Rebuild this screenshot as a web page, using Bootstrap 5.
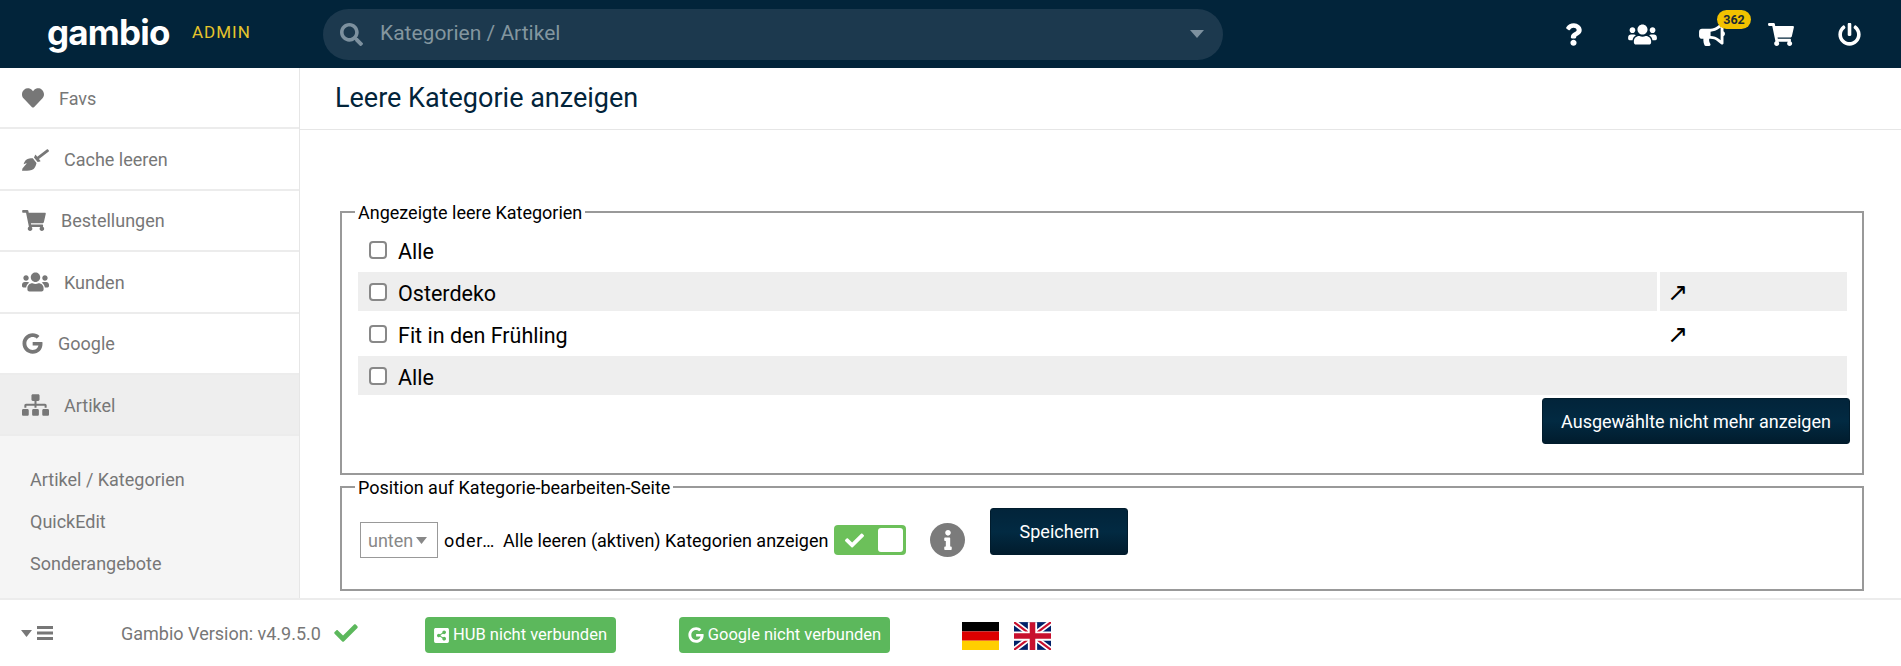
<!DOCTYPE html>
<html lang="de">
<head>
    <meta charset="utf-8">
    <meta name="viewport" content="width=device-width, initial-scale=1">
    <title>Leere Kategorie anzeigen</title>
    <link href="https://cdn.jsdelivr.net/npm/bootstrap@5.3.3/dist/css/bootstrap.min.css" rel="stylesheet">
    <style>
        html, body { height: 100%; overflow: hidden; }
        body { font-family: Roboto, "Liberation Sans", sans-serif; color: #000; }
        svg { fill: currentColor; flex: none; display: block; }

        .app-shell { height: 666px; }

        /* top bar */
        .top-bar { height: 68px; background: #02243a; padding: 0; flex-wrap: nowrap; justify-content: flex-start; }
        .brand-name { font-family: Inter, Lato, sans-serif; font-weight: 700; font-size: 35px; line-height: 1; color: #fff; margin: 0 0 4px 47px; width: 121px; letter-spacing: -.8px; }
        .brand-tag { font-size: 17px; color: #e5c42c; letter-spacing: 1px; margin: 0 0 2px 24px; width: 131px; }
        .search-pill { width: 900px; height: 51px; background: #1c394e; border-radius: 26px; padding: 0 19px 0 17px; color: #7d919f; }
        .search-text { font-size: 21px; margin-left: 17px; color: #83969f; }
        .top-icons { color: #fff; margin-left: 316px; position: relative; }
        .top-cell { width: 69px; height: 68px; }
        .count-bubble { position: absolute; left: 178px; top: 10px; width: 34px; height: 19px; border-radius: 10px; background: #f2c200; color: #1b2a33; font-size: 12.5px; font-weight: 700; line-height: 19px; text-align: center; }

        /* side menu */
        .side-menu { width: 300px; border-right: 1px solid #e6e6e6; color: #777; flex: none; overflow: hidden; }
        .side-item { height: 61.4px; padding: 1px 0 0 22px; gap: 15px; font-size: 18px; border-bottom: 2px solid #ececec; }
        .side-item.is-open { background: #eee; }
        .side-sub { background: #f5f5f5; padding-top: 23px; font-size: 18px; }
        .side-sub div { height: 42px; line-height: 42px; padding-left: 30px; }

        /* content */
        .page-title { height: 62px; margin: 0; padding-left: 35px; border-bottom: 1px solid #e6e6e6; font-size: 27px; font-weight: 400; line-height: 60px; color: #02243a; }
        .page-body { padding: 70px 37px 0 40px; }
        .frame-box { border: 2px solid #999; padding: 0 12px 0 16px; margin: 0; min-width: 0; }
        .frame-box legend { float: none; width: auto; font-size: 18px; line-height: 22px; margin: 0 0 0 -3px; padding: 2px 3px 0; }
        .cat-grid { display: grid; grid-template-columns: 1fr 187px; gap: 3px; margin: 6px 3px 0 0; font-size: 21.5px; }
        .cat-cell { height: 39px; padding-left: 11px; gap: 11px; }
        .cat-cell span { margin-top: 5px; }
        .cat-wide { grid-column: 1 / -1; }
        .cat-shade { background: #eee; }
        .cat-link { padding: 2px 0 0 7px; font-size: 25px; font-family: "DejaVu Sans", sans-serif; line-height: 1; }
        .cat-check.form-check-input { width: 18px; height: 18px; margin: 0; border: 2px solid #888; border-radius: 4px; background-color: #fff; }
        .dark-btn.btn { background: linear-gradient(#02243a, #022a42 50%, #011c2d); border: 1px solid #011c2d; color: #fff; font-size: 18px; border-radius: 3px; padding: 0; }
        .hide-btn.btn { width: 308px; height: 46px; margin: 3px 0 29px; }
        .save-btn.btn { width: 138px; height: 47px; margin-left: 25px; }
        .pos-row { padding: 9px 0 31px 2px; font-size: 18px; }
        .pos-left { margin-top: 14px; }
        .pos-select { width: 78px; height: 36px; border: 1px solid #999; color: #888; padding-left: 7px; gap: 3px; margin-right: 6px; }
        .oder-text { margin-right: 8px; letter-spacing: .8px; }
        .toggle-box { width: 72px; height: 30px; background: #6cc05a; border-radius: 4px; margin-left: 6px; padding: 3px; color: #fff; }
        .toggle-box span { width: 25px; height: 24px; background: #fff; border-radius: 3px; }
        .info-dot { width: 35px; height: 34px; border-radius: 50%; background: #7b7b7b; color: #fff; margin-left: 24px; }

        /* bottom bar */
        .bottom-bar { height: 68px; flex: none; border-top: 2px solid #ececec; background: #fff; color: #777; font-size: 18px; }
        .menu-toggle { width: 121px; padding-left: 21px; gap: 5px; }
        .version-text { width: 237px; white-space: nowrap; }
        .ok-mark { color: #5cb85c; }
        .status-btn.btn { background: #5cb85c; border: 0; color: #fff; height: 36px; font-size: 16.5px; padding: 0; gap: 4px; border-radius: 4px; white-space: nowrap; margin-top: 4px; }
        .hub-btn.btn { width: 191px; margin-left: 67px; }
        .goo-btn.btn { width: 211px; margin-left: 63px; }
        .flag-de { margin: 5px 0 0 72px; }
        .flag-uk { margin: 5px 0 0 15px; }
    </style>
</head>
<body>
<div class="app-shell d-flex flex-column">
    <nav class="navbar top-bar">
        <div class="brand-name">gambio</div>
        <div class="brand-tag">ADMIN</div>
        <div class="search-pill d-flex align-items-center">
            <svg width="23" height="23" viewBox="0 0 512 512"><path d="M505 442.7L405.3 343c-4.5-4.5-10.6-7-17-7H372c27.6-35.3 44-79.7 44-128C416 93.1 322.9 0 208 0S0 93.1 0 208s93.1 208 208 208c48.3 0 92.7-16.4 128-44v16.3c0 6.4 2.5 12.5 7 17l99.7 99.7c9.4 9.4 24.6 9.4 33.9 0l28.3-28.3c9.4-9.4 9.4-24.6.1-34zM208 336c-70.7 0-128-57.2-128-128 0-70.7 57.2-128 128-128 70.7 0 128 57.2 128 128 0 70.7-57.2 128-128 128z"/></svg>
            <span class="search-text flex-grow-1">Kategorien / Artikel</span>
            <svg width="14" height="8" viewBox="0 0 14 8"><path d="M0 0h14L7 8z"/></svg>
        </div>
        <div class="top-icons d-flex">
            <div class="top-cell d-flex align-items-center justify-content-center">
                <svg width="17" height="23" viewBox="0 0 384 512"><path d="M202.021 0C122.202 0 70.503 32.703 29.914 91.026c-7.363 10.58-5.093 25.086 5.178 32.874l43.138 32.709c10.373 7.865 25.132 6.026 33.253-4.148 25.049-31.381 43.63-49.449 82.757-49.449 30.764 0 68.816 19.799 68.816 49.631 0 22.552-18.617 34.134-48.993 51.164-35.423 19.86-82.299 44.576-82.299 106.405V320c0 13.255 10.745 24 24 24h72.471c13.255 0 24-10.745 24-24v-5.773c0-42.86 125.268-44.645 125.268-160.627C377.504 66.256 286.902 0 202.021 0zM192 373.459c-38.196 0-69.271 31.075-69.271 69.271 0 38.195 31.075 69.27 69.271 69.27s69.271-31.075 69.271-69.271-31.075-69.27-69.271-69.27z"/></svg>
            </div>
            <div class="top-cell d-flex align-items-center justify-content-center">
                <svg width="29" height="23" viewBox="0 0 640 512"><path d="M96 224c35.3 0 64-28.7 64-64s-28.7-64-64-64-64 28.7-64 64 28.7 64 64 64zm448 0c35.3 0 64-28.7 64-64s-28.7-64-64-64-64 28.7-64 64 28.7 64 64 64zm32 32h-64c-17.6 0-33.5 7.1-45.1 18.6 40.3 22.1 68.9 62 75.1 109.4h66c17.7 0 32-14.3 32-32v-32c0-35.3-28.7-64-64-64zm-256 0c61.9 0 112-50.1 112-112S381.9 32 320 32 208 82.1 208 144s50.1 112 112 112zm76.8 32h-8.3c-20.8 10-43.9 16-68.5 16s-47.6-6-68.5-16h-8.3C179.6 288 128 339.6 128 403.2V432c0 26.5 21.5 48 48 48h288c26.5 0 48-21.5 48-48v-28.8c0-63.6-51.6-115.2-115.2-115.2zm-223.7-13.4C161.5 263.1 145.6 256 128 256H64c-35.3 0-64 28.7-64 64v32c0 17.7 14.3 32 32 32h65.9c6.3-47.4 34.9-87.3 75.2-109.4z"/></svg>
            </div>
            <div class="top-cell d-flex align-items-center justify-content-center">
                <svg width="26" height="23" viewBox="0 0 576 512"><path d="M576 240c0-23.63-12.95-44.04-32-55.12V32.01C544 23.26 537.02 0 512 0c-7.12 0-14.19 2.38-19.98 7.02l-85.03 68.03C364.28 109.19 310.66 128 256 128H64c-35.35 0-64 28.65-64 64v96c0 35.35 28.65 64 64 64h33.7c-1.39 10.48-2.18 21.14-2.18 32 0 39.77 9.26 77.35 25.56 110.94 5.19 10.69 16.52 17.06 28.4 17.06h74.28c26.05 0 41.69-29.84 25.9-50.56-16.4-21.52-26.15-48.36-26.15-77.44 0-11.11 1.62-21.79 4.41-32H256c54.66 0 108.28 18.81 150.98 52.95l85.03 68.03a32.023 32.023 0 0 0 19.98 7.02c24.92 0 32-22.78 32-32V295.13C563.05 284.04 576 263.63 576 240zm-96 141.42l-33.05-26.44C392.95 311.78 325.12 288 256 288v-96c69.12 0 136.95-23.78 190.95-66.98L480 98.58v282.84z"/></svg>
            </div>
            <div class="top-cell d-flex align-items-center justify-content-center">
                <svg width="26" height="23" viewBox="0 0 576 512"><path d="M528.12 301.319l47.273-208C578.806 78.301 567.391 64 551.99 64H159.208l-9.166-44.81C147.758 8.021 137.93 0 126.529 0H24C10.745 0 0 10.745 0 24v16c0 13.255 10.745 24 24 24h69.883l70.248 343.435C147.325 417.1 136 435.222 136 456c0 30.928 25.072 56 56 56s56-25.072 56-56c0-15.674-6.447-29.835-16.824-40h209.647C430.447 426.165 424 440.326 424 456c0 30.928 25.072 56 56 56s56-25.072 56-56c0-22.172-12.888-41.332-31.579-50.405l5.517-24.276c3.413-15.018-8.002-29.319-23.403-29.319H218.117l-6.545-32h293.145c11.206 0 20.92-7.754 23.403-18.681z"/></svg>
            </div>
            <div class="top-cell d-flex align-items-center justify-content-center">
                <svg width="23" height="23" viewBox="0 0 512 512"><path d="M400 54.1c63 45 104 118.6 104 201.9 0 136.8-110.8 247.7-247.5 248C120 504.3 8.2 393 8 256.4 7.9 173.1 48.9 99.3 111.8 54.2c11.7-8.3 28-4.8 35 7.7L162.6 90c5.9 10.5 3.1 23.8-6.6 31-41.5 30.8-68 79.6-68 134.9-.1 92.3 74.5 168.1 168 168.1 91.6 0 168.6-74.2 168-169.1-.3-51.8-24.7-101.8-68.1-134-9.7-7.2-12.4-20.5-6.5-30.9l15.8-28.1c7-12.4 23.2-16.1 35.2-7.7zM296 264V24c0-13.3-10.7-24-24-24h-32c-13.3 0-24 10.7-24 24v240c0 13.3 10.7 24 24 24h32c13.3 0 24-10.7 24-24z"/></svg>
            </div>
            <span class="count-bubble">362</span>
        </div>
    </nav>

    <div class="d-flex flex-grow-1 overflow-hidden">
        <aside class="side-menu">
            <div class="side-item d-flex align-items-center">
                <svg width="22" height="22" viewBox="0 0 512 512"><path d="M462.3 62.6C407.5 15.9 326 24.3 275.7 76.2L256 96.5l-19.7-20.3C186.1 24.3 104.5 15.9 49.7 62.6c-62.8 53.6-66.1 149.8-9.9 207.9l193.5 199.8c12.5 12.9 32.8 12.9 45.3 0l193.5-199.8c56.3-58.1 53-154.3-9.8-207.9z"/></svg>
                <span>Favs</span>
            </div>
            <div class="side-item d-flex align-items-center">
                <svg width="27" height="22" viewBox="0 0 640 512"><path d="M256.47 216.77l86.73 109.18s-16.6 102.36-76.57 150.12C206.66 523.85 0 510.19 0 510.19s3.8-23.14 11-55.43l94.62-112.17c3.97-4.7-.87-11.62-6.65-9.5l-60.4 22.09c14.44-41.66 32.72-80.04 54.6-97.47 59.97-47.76 163.3-40.94 163.3-40.94zM636.53 31.03l-19.86-25c-5.49-6.9-15.52-8.05-22.41-2.56l-232.48 177.8-34.14-42.97c-5.09-6.41-15.14-5.21-18.59 2.21l-25.33 54.55 86.73 109.18 58.8-12.45c8-1.69 11.42-11.2 6.34-17.6l-34.09-42.92 232.48-177.8c6.89-5.48 8.04-15.53 2.55-22.44z"/></svg>
                <span>Cache leeren</span>
            </div>
            <div class="side-item d-flex align-items-center">
                <svg width="24" height="21" viewBox="0 0 576 512"><path d="M528.12 301.319l47.273-208C578.806 78.301 567.391 64 551.99 64H159.208l-9.166-44.81C147.758 8.021 137.93 0 126.529 0H24C10.745 0 0 10.745 0 24v16c0 13.255 10.745 24 24 24h69.883l70.248 343.435C147.325 417.1 136 435.222 136 456c0 30.928 25.072 56 56 56s56-25.072 56-56c0-15.674-6.447-29.835-16.824-40h209.647C430.447 426.165 424 440.326 424 456c0 30.928 25.072 56 56 56s56-25.072 56-56c0-22.172-12.888-41.332-31.579-50.405l5.517-24.276c3.413-15.018-8.002-29.319-23.403-29.319H218.117l-6.545-32h293.145c11.206 0 20.92-7.754 23.403-18.681z"/></svg>
                <span>Bestellungen</span>
            </div>
            <div class="side-item d-flex align-items-center">
                <svg width="27" height="22" viewBox="0 0 640 512"><path d="M96 224c35.3 0 64-28.7 64-64s-28.7-64-64-64-64 28.7-64 64 28.7 64 64 64zm448 0c35.3 0 64-28.7 64-64s-28.7-64-64-64-64 28.7-64 64 28.7 64 64 64zm32 32h-64c-17.6 0-33.5 7.1-45.1 18.6 40.3 22.1 68.9 62 75.1 109.4h66c17.7 0 32-14.3 32-32v-32c0-35.3-28.7-64-64-64zm-256 0c61.9 0 112-50.1 112-112S381.9 32 320 32 208 82.1 208 144s50.1 112 112 112zm76.8 32h-8.3c-20.8 10-43.9 16-68.5 16s-47.6-6-68.5-16h-8.3C179.6 288 128 339.6 128 403.2V432c0 26.5 21.5 48 48 48h288c26.5 0 48-21.5 48-48v-28.8c0-63.6-51.6-115.2-115.2-115.2zm-223.7-13.4C161.5 263.1 145.6 256 128 256H64c-35.3 0-64 28.7-64 64v32c0 17.7 14.3 32 32 32h65.9c6.3-47.4 34.9-87.3 75.2-109.4z"/></svg>
                <span>Kunden</span>
            </div>
            <div class="side-item d-flex align-items-center">
                <svg width="21" height="21" viewBox="0 0 488 512"><path d="M488 261.8C488 403.3 391.1 504 248 504 110.8 504 0 393.2 0 256S110.8 8 248 8c66.8 0 123 24.5 166.3 64.9l-67.5 64.9C258.5 52.6 94.3 116.6 94.3 256c0 86.5 69.1 156.6 153.7 156.6 98.2 0 135-70.4 140.8-106.9H248v-85.3h236.1c2.3 12.7 3.9 24.9 3.9 41.4z"/></svg>
                <span>Google</span>
            </div>
            <div class="side-item is-open d-flex align-items-center">
                <svg width="27" height="22" viewBox="0 0 640 512"><path d="M128 352H32c-17.67 0-32 14.33-32 32v96c0 17.67 14.33 32 32 32h96c17.67 0 32-14.33 32-32v-96c0-17.67-14.33-32-32-32zm-24-80h192v48h48v-48h192v48h48v-57.59c0-21.17-17.23-38.41-38.41-38.41H344v-64h40c17.67 0 32-14.33 32-32V32c0-17.67-14.33-32-32-32H256c-17.67 0-32 14.33-32 32v96c0 17.67 14.33 32 32 32h40v64H94.41C73.23 224 56 241.23 56 262.41V320h48v-48zm264 80h-96c-17.67 0-32 14.33-32 32v96c0 17.67 14.33 32 32 32h96c17.67 0 32-14.33 32-32v-96c0-17.67-14.33-32-32-32zm240 0h-96c-17.67 0-32 14.33-32 32v96c0 17.67 14.33 32 32 32h96c17.67 0 32-14.33 32-32v-96c0-17.67-14.33-32-32-32z"/></svg>
                <span>Artikel</span>
            </div>
            <div class="side-sub h-100">
                <div>Artikel / Kategorien</div>
                <div>QuickEdit</div>
                <div>Sonderangebote</div>
            </div>
        </aside>

        <main class="flex-grow-1 overflow-hidden">
            <h1 class="page-title">Leere Kategorie anzeigen</h1>
            <div class="page-body">
                <fieldset class="frame-box">
                    <legend>Angezeigte leere Kategorien</legend>
                    <div class="cat-grid">
                        <label class="cat-cell cat-wide d-flex align-items-center"><input class="form-check-input cat-check" type="checkbox"><span>Alle</span></label>
                        <label class="cat-cell cat-shade d-flex align-items-center"><input class="form-check-input cat-check" type="checkbox"><span>Osterdeko</span></label>
                        <div class="cat-link cat-shade d-flex align-items-center">↗</div>
                        <label class="cat-cell d-flex align-items-center"><input class="form-check-input cat-check" type="checkbox"><span>Fit in den Frühling</span></label>
                        <div class="cat-link d-flex align-items-center">↗</div>
                        <label class="cat-cell cat-wide cat-shade d-flex align-items-center"><input class="form-check-input cat-check" type="checkbox"><span>Alle</span></label>
                    </div>
                    <div class="d-flex justify-content-end">
                        <button type="button" class="btn dark-btn hide-btn">Ausgewählte nicht mehr anzeigen</button>
                    </div>
                </fieldset>
                <fieldset class="frame-box">
                    <legend>Position auf Kategorie-bearbeiten-Seite</legend>
                    <div class="pos-row d-flex align-items-start">
                        <div class="pos-left d-flex align-items-center">
                            <div class="pos-select d-flex align-items-center">
                                <span>unten</span>
                                <svg width="11" height="7" viewBox="0 0 11 7"><path d="M0 0h11L5.5 7z"/></svg>
                            </div>
                            <span class="oder-text">oder…</span>
                            <span>Alle leeren (aktiven) Kategorien anzeigen</span>
                            <div class="toggle-box d-flex align-items-center justify-content-between">
                                <svg class="ms-2" width="19" height="15" viewBox="0 60 512 392"><path d="M173.898 439.404l-166.4-166.4c-9.997-9.997-9.997-26.206 0-36.204l36.203-36.204c9.997-10.998 26.207-9.998 36.204 0L192 312.69 432.095 72.596c9.997-9.997 26.207-9.997 36.204 0l36.203 36.204c9.997 9.997 9.997 26.206 0 36.204l-294.4 294.401c-9.998 9.997-26.207 9.997-36.204-.001z"/></svg>
                                <span></span>
                            </div>
                            <div class="info-dot d-flex align-items-center justify-content-center">
                                <svg width="10" height="20" viewBox="0 0 192 512"><path d="M20 424.229h20V279.771H20c-11.046 0-20-8.954-20-20V212c0-11.046 8.954-20 20-20h112c11.046 0 20 8.954 20 20v212.229h20c11.046 0 20 8.954 20 20V492c0 11.046-8.954 20-20 20H20c-11.046 0-20-8.954-20-20v-47.771c0-11.046 8.954-20 20-20zM96 0C56.235 0 24 32.235 24 72s32.235 72 72 72 72-32.236 72-72S135.764 0 96 0z"/></svg>
                            </div>
                        </div>
                        <button type="button" class="btn dark-btn save-btn">Speichern</button>
                    </div>
                </fieldset>
            </div>
        </main>
    </div>

    <footer class="bottom-bar d-flex align-items-center">
        <div class="menu-toggle d-flex align-items-center">
            <svg width="11" height="7" viewBox="0 0 11 7"><path d="M0 0h11L5.5 7z"/></svg>
            <svg width="16" height="14" viewBox="0 0 16 14"><path d="M0 0h16v3H0zM0 5.5h16v3H0zM0 11h16v3H0z"/></svg>
        </div>
        <span class="version-text d-flex align-items-center justify-content-between">
            <span>Gambio Version: v4.9.5.0</span>
            <svg class="ok-mark" width="24" height="18" viewBox="0 60 512 392"><path d="M173.898 439.404l-166.4-166.4c-9.997-9.997-9.997-26.206 0-36.204l36.203-36.204c9.997-10.998 26.207-9.998 36.204 0L192 312.69 432.095 72.596c9.997-9.997 26.207-9.997 36.204 0l36.203 36.204c9.997 9.997 9.997 26.206 0 36.204l-294.4 294.401c-9.998 9.997-26.207 9.997-36.204-.001z"/></svg>
        </span>
        <button type="button" class="btn status-btn hub-btn d-flex align-items-center justify-content-center">
            <svg width="15" height="17" viewBox="0 0 448 512"><path d="M448 80v352c0 26.51-21.49 48-48 48H48c-26.51 0-48-21.49-48-48V80c0-26.51 21.49-48 48-48h352c26.51 0 48 21.49 48 48zM304 296c-14.562 0-27.823 5.561-37.783 14.671l-67.958-40.775a56.339 56.339 0 0 0 0-27.793l67.958-40.775C276.177 210.439 289.438 216 304 216c30.928 0 56-25.072 56-56s-25.072-56-56-56-56 25.072-56 56c0 4.797.605 9.453 1.74 13.897l-67.958 40.775C171.823 205.561 158.562 200 144 200c-30.928 0-56 25.072-56 56s25.072 56 56 56c14.562 0 27.823-5.561 37.782-14.671l67.958 40.775a56.088 56.088 0 0 0-1.74 13.897c0 30.928 25.072 56 56 56s56-25.072 56-56C360 321.072 334.928 296 304 296z"/></svg>
            <span>HUB nicht verbunden</span>
        </button>
        <button type="button" class="btn status-btn goo-btn d-flex align-items-center justify-content-center">
            <svg width="16" height="16" viewBox="0 0 488 512"><path d="M488 261.8C488 403.3 391.1 504 248 504 110.8 504 0 393.2 0 256S110.8 8 248 8c66.8 0 123 24.5 166.3 64.9l-67.5 64.9C258.5 52.6 94.3 116.6 94.3 256c0 86.5 69.1 156.6 153.7 156.6 98.2 0 135-70.4 140.8-106.9H248v-85.3h236.1c2.3 12.7 3.9 24.9 3.9 41.4z"/></svg>
            <span>Google nicht verbunden</span>
        </button>
        <svg class="flag-de" width="37" height="28" viewBox="0 0 37 28"><rect width="37" height="9.4" fill="#000"/><rect y="9.4" width="37" height="9.3" fill="#d00"/><rect y="18.7" width="37" height="9.3" fill="#ffce00"/></svg>
        <svg class="flag-uk" width="37" height="28" viewBox="0 0 60 45">
            <rect width="60" height="45" fill="#012169"/>
            <path d="M0 0L60 45M60 0L0 45" stroke="#fff" stroke-width="9"/>
            <path d="M0 0L60 45M60 0L0 45" stroke="#c8102e" stroke-width="3.5"/>
            <path d="M30 0V45M0 22.5H60" stroke="#fff" stroke-width="15"/>
            <path d="M30 0V45M0 22.5H60" stroke="#c8102e" stroke-width="9"/>
        </svg>
    </footer>
</div>
<script src="https://cdn.jsdelivr.net/npm/bootstrap@5.3.3/dist/js/bootstrap.bundle.min.js"></script>
</body>
</html>
